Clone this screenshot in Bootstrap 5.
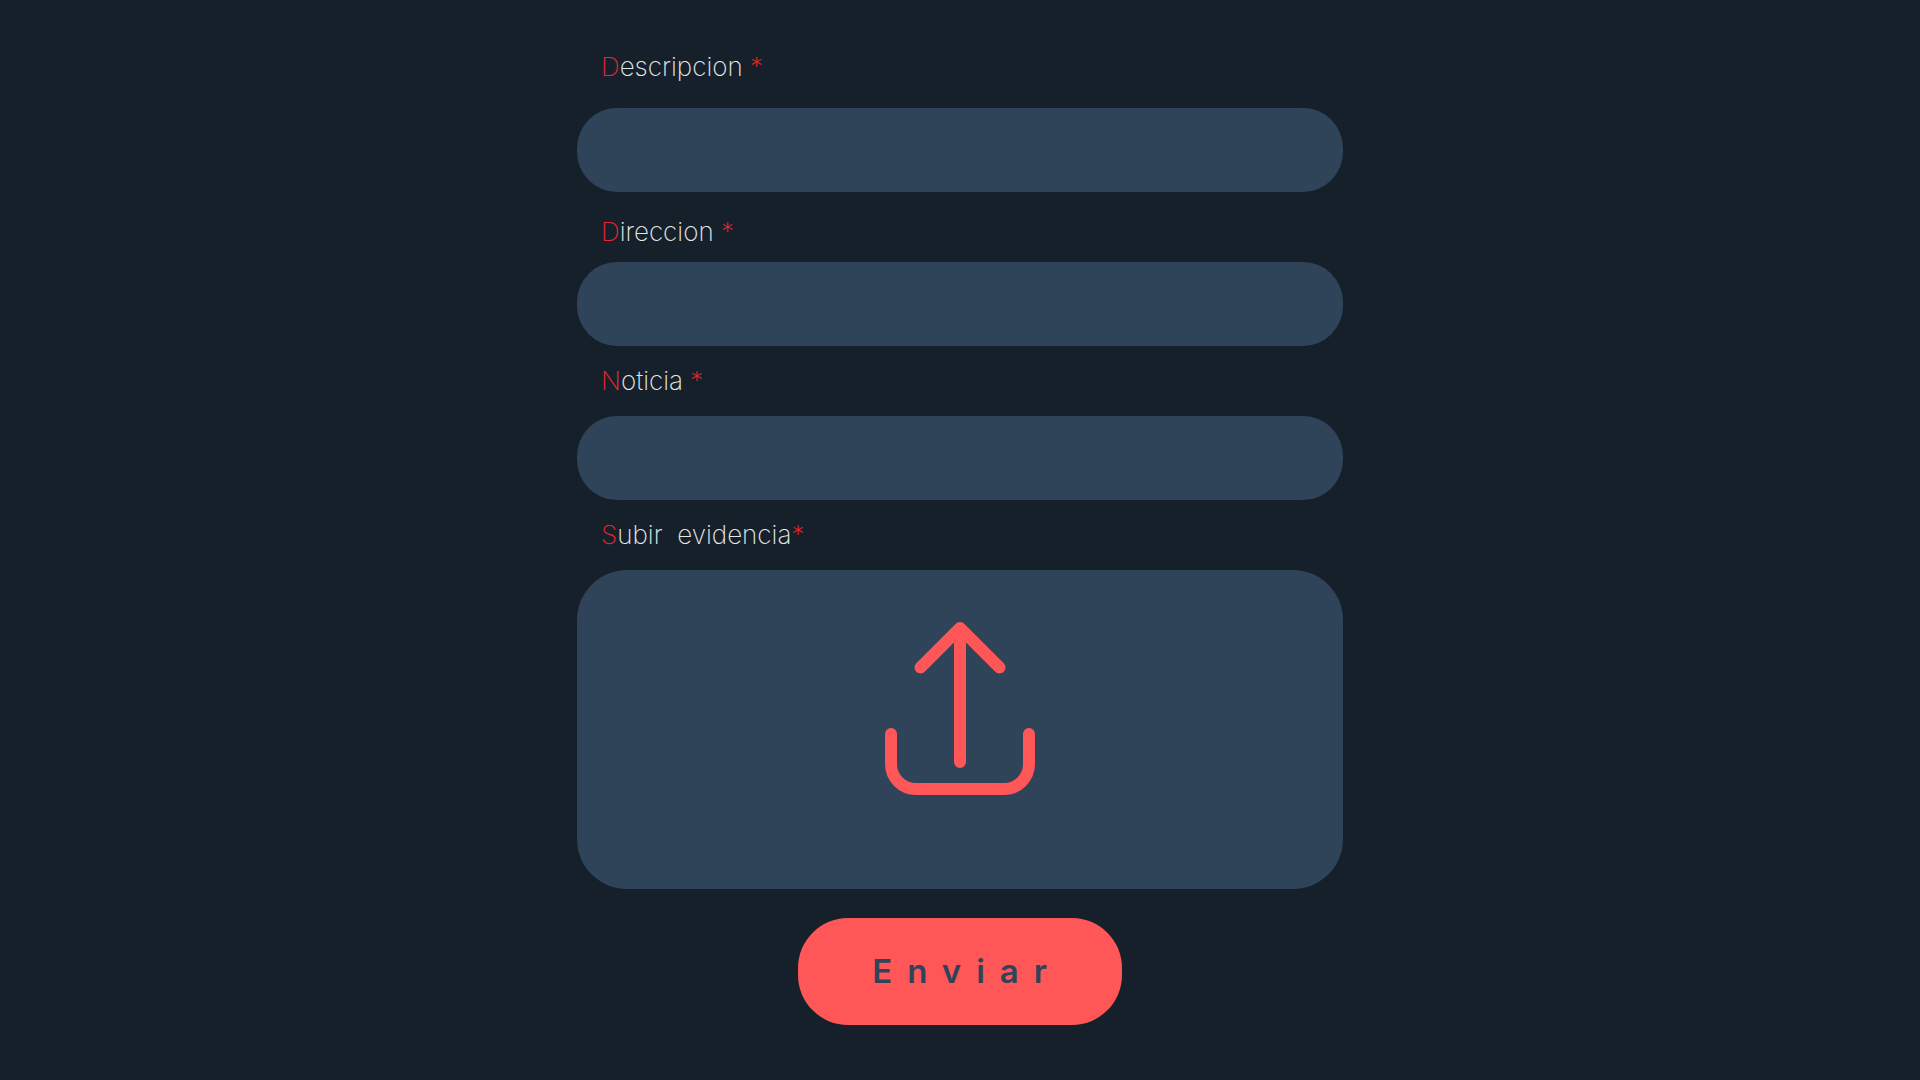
<!DOCTYPE html>
<html lang="es">
<head>
<meta charset="utf-8">
<meta name="viewport" content="width=device-width, initial-scale=1">
<title>Enviar noticia</title>
<link href="https://cdn.jsdelivr.net/npm/bootstrap@5.3.0/dist/css/bootstrap.min.css" rel="stylesheet">
<style>
  body { background: #16202a; font-family: Inter, "Open Sans", sans-serif; }
  .report-form { max-width: 766px; padding: 51px 0 54px; }
  .field-label { color: #e4e8e8; font-size: 26px; font-weight: 200; line-height: 32px; padding-left: 24px; margin: 19px 0; white-space: pre-wrap; }
  .label-first { margin: 0 0 25px; }
  .label-low { margin: 24px 0 14px; }
  .accent { color: #e3292f; }
  .field-box, .field-box:focus { height: 84px; border: 0; border-radius: 40px; background: #2f4459; color: #e4e8e8; font-size: 26px; padding: 0 32px; }
  .drop-zone { height: 319px; border-radius: 50px; background: #2f4459; padding-top: 52px; cursor: pointer; }
  .btn-send, .btn-send:hover { width: 324px; height: 107px; margin-top: 29px; border: 0; border-radius: 50px; background: #ff5757; color: #2f4459; font-size: 33px; font-weight: 600; letter-spacing: 15px; padding: 0 0 0 14px; }
</style>
<script src="https://cdn.jsdelivr.net/npm/bootstrap@5.3.0/dist/js/bootstrap.bundle.min.js"></script>
</head>
<body>
<main class="container-fluid">
  <form class="report-form mx-auto d-flex flex-column">
    <label class="field-label label-first" for="descripcion"><span class="accent">D</span>escripcion <span class="accent">*</span></label>
    <input class="form-control field-box" type="text" id="descripcion" required>

    <label class="field-label label-low" for="direccion"><span class="accent">D</span>ireccion <span class="accent">*</span></label>
    <input class="form-control field-box" type="text" id="direccion" required>

    <label class="field-label" for="noticia"><span class="accent">N</span>oticia <span class="accent">*</span></label>
    <input class="form-control field-box" type="text" id="noticia" required>

    <label class="field-label" for="evidencia"><span class="accent">S</span>ubir  evidencia<span class="accent">*</span></label>
    <label class="drop-zone d-flex justify-content-center align-items-start" for="evidencia">
      <svg width="150" height="173" viewBox="25 22 150 173" fill="none" stroke="#ff5757" stroke-width="12" stroke-linecap="round" stroke-linejoin="round" aria-hidden="true">
        <path d="M100 28V162M60.500 67.500L100 28L139.500 67.500"/>
        <path d="M31 134V164A25 25 0 0 0 56 189H144A25 25 0 0 0 169 164V134"/>
      </svg>
      <input class="visually-hidden" type="file" id="evidencia">
    </label>

    <button class="btn btn-send align-self-center" type="submit">Enviar</button>
  </form>
</main>
</body>
</html>
